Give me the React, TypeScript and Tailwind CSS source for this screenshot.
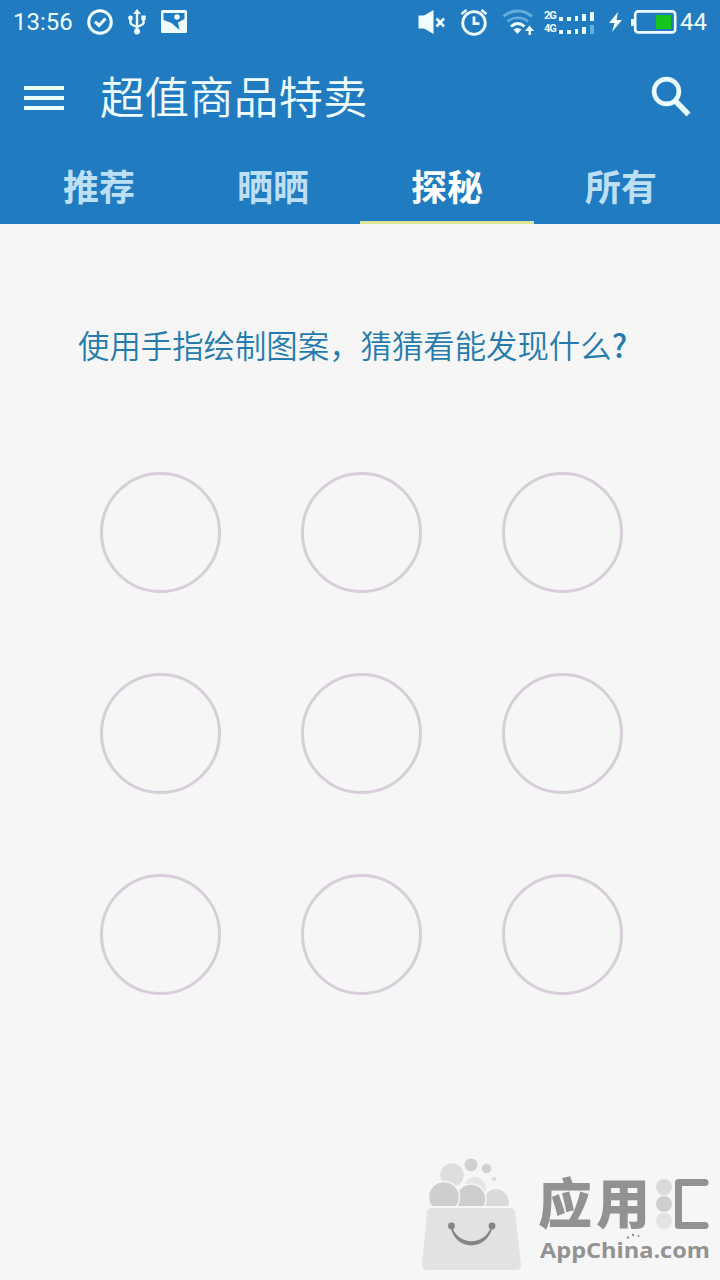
import React from "react";

const tabs = [
  { id: "recommend", label: "推荐" },
  { id: "show", label: "晒晒" },
  { id: "explore", label: "探秘" },
  { id: "all", label: "所有" },
];

export default function App() {
  const [active, setActive] = React.useState("explore");

  return (
    <div className="flex h-[1280px] w-[720px] flex-col overflow-hidden bg-[#f6f6f6] font-['Noto_Sans_CJK_SC',sans-serif]">
      <header className="h-[224px] bg-[#207bc0] text-[#f0fdff]">
        <StatusBar />

        <div className="flex h-[106px] items-center justify-between pl-6 pr-7">
          <div className="flex items-center">
            <button className="flex w-10 flex-col gap-[6px] pt-[2px]" aria-label="menu">
              <span className="h-1 bg-[#e9fbfd]" />
              <span className="h-1 bg-[#e9fbfd]" />
              <span className="h-1 bg-[#e9fbfd]" />
            </button>
            <h1 className="ml-[36px] pb-[4px] text-[44.6px] leading-[64px] font-[350]">超值商品特卖</h1>
          </div>
          <button className="pb-[2px]" aria-label="search">
            <svg width="42" height="42" viewBox="0 0 42 42" fill="none" stroke="#e9fbfd">
              <circle cx="16.500" cy="16.500" r="12.400" strokeWidth="4.600" />
              <path d="M25 25.500L38.500 39.500" strokeWidth="5.500" />
            </svg>
          </button>
        </div>

        {/* Tabs */}
        <nav className="flex h-[74px] px-3">
          {tabs.map((t) => (
            <button
              key={t.id}
              onClick={() => setActive(t.id)}
              className={`flex flex-1 items-center justify-center border-b-[3px] pb-[1px] text-[36px] leading-[52px] font-bold ${
                t.id === active ? "border-[#d9e795] text-white" : "border-transparent text-[#bcdff6]"
              }`}
            >
              {t.label}
            </button>
          ))}
        </nav>
      </header>

      <main className="flex flex-1 flex-col">
        <p className="mt-[98px] ml-[78px] text-[31.4px] leading-[46px] font-[350] text-[#247bac]">
          使用手指绘制图案，猜猜看能发现什么<span className="font-medium">?</span>
        </p>

        <div className="mt-[104px] ml-[100px] grid w-[523px] grid-cols-3 justify-between gap-x-[80px] gap-y-[80px]">
          {Array.from({ length: 9 }, (_, i) => (
            <div key={i} className="size-[121px] rounded-full border-[3px] border-[#d8ceda]" />
          ))}
        </div>
      </main>

      <Watermark />
    </div>
  );
}

function StatusBar() {
  return (
    <div className="flex h-11 items-center pl-[13px] pr-[13px] font-[Roboto,sans-serif] text-[24px]">
      <span className="w-[73px] leading-[44px]">13:56</span>

      {/* Notifications */}
      <svg width="28" height="28" viewBox="0 0 28 28" fill="none" stroke="currentColor" strokeWidth="3">
        <circle cx="14" cy="14" r="11.300" />
        <path d="M9 13.500l4 4 6.500-7" />
      </svg>
      <svg className="ml-[13px]" width="20" height="28" viewBox="0 0 20 28" fill="none" stroke="currentColor" strokeWidth="2.400">
        <path d="M10 5v18M3.500 10v5c0 2 6.500 3 6.500 5M16.500 10v5c0 2-6.500 3-6.500 5" />
        <path d="M10 1l4 5H6z" fill="currentColor" stroke="none" />
        <circle cx="10" cy="23.500" r="3" fill="currentColor" stroke="none" />
        <circle cx="3.500" cy="10" r="2.400" fill="currentColor" stroke="none" />
        <path d="M14.300 7.500h4.400V12h-4.400z" fill="currentColor" stroke="none" />
      </svg>
      {/* picture with its sky cut out */}
      <svg className="ml-[13px]" width="28" height="24" viewBox="0 0 28 24">
        <rect x="1" y="0" width="26" height="23" rx="1.500" fill="currentColor" />
        <path d="M3.500 3h21v6l-6.500 3.500 1.500 7.500-8-7-8-3z" fill="#207bc0" />
        <circle cx="17" cy="7" r="2.700" fill="currentColor" />
      </svg>

      <div className="ml-auto flex items-center">
        <svg width="28" height="26" viewBox="0 0 28 26">
          <path d="M.5 6.500h5.500L15.500 1v24L6 19.500H.5z" fill="currentColor" />
          <path d="M18.500 9.500l7.500 8M26 9.500l-7.500 8" stroke="currentColor" strokeWidth="2.600" />
        </svg>
        <svg className="ml-[14px]" width="28" height="28" viewBox="0 0 28 28" fill="none" stroke="currentColor">
          <circle cx="14" cy="15" r="11.300" strokeWidth="2.800" />
          <path d="M14 8.500v7.200h5.500" strokeWidth="2.800" />
          <path d="M1.500 6l5-4M26.500 6l-5-4" strokeWidth="2.500" />
        </svg>
        <svg className="ml-[14px]" width="32" height="28" viewBox="0 0 32 28" fill="none">
          <path d="M1.500 8.500c8-7.500 20.500-7.500 28.500 0" stroke="#62aedd" strokeWidth="3" />
          <path d="M5.500 13.500c6-5 14.500-5 20.500 0" stroke="#62aedd" strokeWidth="2.700" />
          <path d="M9 18.500c4.500-4 9-4 13.500 0" stroke="currentColor" strokeWidth="3" />
          <path d="M15.500 26l-4-4.500c2.500-2 5.500-2 8 0z" fill="currentColor" />
          <path d="M26.500 27v-4h-3.500l4.500-5.500 4.500 5.500h-3v4z" fill="currentColor" />
        </svg>

        <div className="ml-[10px] flex flex-col gap-[2px] text-[11px] leading-[11px] font-bold">
          <SignalRow label="2G" bars={[4, 4, 5, 7, 9]} />
          <SignalRow label="4G" bars={[4, 4, 5, 7, 9]} dimLast />
        </div>

        <svg className="ml-[14px]" width="16" height="22" viewBox="0 0 16 22" fill="currentColor">
          <path d="M10 1L1 12h5.500L4 21l10-12H8.500z" />
        </svg>
        <svg className="ml-[7px]" width="46" height="24" viewBox="0 0 46 24">
          <path d="M0 9h4v7H0z" fill="currentColor" />
          <rect x="4.200" y="1.400" width="40" height="21" rx="3" fill="none" stroke="currentColor" strokeWidth="2.600" />
          <path d="M25 5h15v14H25z" fill="#13c51c" />
        </svg>
        <span className="ml-[3px] leading-[44px]">44</span>
      </div>
    </div>
  );
}

function SignalRow({ label, bars, dimLast }: { label: string; bars: number[]; dimLast?: boolean }) {
  return (
    <div className="flex h-[11px] items-end">
      <span className="w-[15px] tracking-[-1px]">{label}</span>
      <div className="flex items-end gap-[4px]">
        {bars.map((h, i) => (
          <span key={i} className={`w-[3.8px] ${dimLast && i === bars.length - 1 ? "bg-[#62aedd]" : "bg-[#e9fbfd]"}`} style={{ height: h }} />
        ))}
      </div>
    </div>
  );
}

function Watermark() {
  return (
    <footer className="flex h-[130px] justify-end pr-[8px]">
      <svg className="mt-[6px]" width="102" height="118" viewBox="0 0 102 118">
        <g stroke="#f6f6f6" strokeWidth="1.500">
          <circle cx="31" cy="19" r="12.500" fill="#dedede" />
          <circle cx="54" cy="32" r="11.500" fill="#e5e5e5" />
          <circle cx="75" cy="46" r="13.500" fill="#d9d9d9" />
          <circle cx="50" cy="43" r="15" fill="#cecece" />
          <circle cx="23" cy="41" r="15.500" fill="#cecece" />
        </g>
        <circle cx="50" cy="9" r="6.500" fill="#d0d0d0" />
        <circle cx="65.500" cy="12.500" r="4.800" fill="#d2d2d2" />
        <circle cx="73" cy="23" r="2.200" fill="#dadada" />
        <path d="M0 50h102v68H0z" fill="#f6f6f6" />
        <path d="M11 52h78q4 0 5 4l6 53q0 5-5 5H6q-5 0-5-5l5-53q1-4 5-4z" fill="#e2e2e2" />
        {/* smile, thicker in the middle */}
        <path d="M29.500 71c5 24.500 36.500 24.500 42 0h-1.500c-7 19-32 19-39 0z" fill="#858585" />
        <circle cx="30.500" cy="70" r="3.400" fill="#858585" />
        <circle cx="71" cy="70" r="3.400" fill="#858585" />
      </svg>

      <div className="ml-[15px] w-[174px] pt-[24px] text-[#929292]">
        <div className="flex h-[60px] items-center" aria-label="应用汇">
          <span className="w-[117px] shrink-0 pb-[7px] text-[54px] leading-[54px] font-black tracking-[4px] whitespace-nowrap">应用</span>
          <svg className="shrink-0" width="18" height="52" viewBox="0 0 18 52">
            <circle cx="9" cy="9" r="8" fill="#dadada" />
            <circle cx="9" cy="26" r="8" fill="#cfcfcf" />
            <circle cx="9" cy="43" r="8" fill="#e3e3e3" />
          </svg>
          {/* right half of 汇, the dots stand for the water radical */}
          <svg className="ml-[1px] shrink-0" width="35" height="52" viewBox="0 0 35 52">
            <path d="M31 4.500H4.500v43H31" fill="none" stroke="currentColor" strokeWidth="7" strokeLinejoin="round" strokeLinecap="round" />
          </svg>
        </div>
        <div className="relative pl-[2px] font-['Open_Sans',sans-serif] text-[22px] leading-[22px] font-bold">
          <span className="mt-[4px] block w-max origin-left scale-x-[1.07]">AppChina.com</span>
          <svg className="absolute top-[-5px] left-[86px]" width="20" height="8" viewBox="0 0 20 8" fill="currentColor">
            <circle cx="4" cy="4.500" r="1.200" />
            <circle cx="9" cy="2" r="1.200" />
            <circle cx="14.500" cy="3" r="1" />
          </svg>
        </div>
      </div>
    </footer>
  );
}
